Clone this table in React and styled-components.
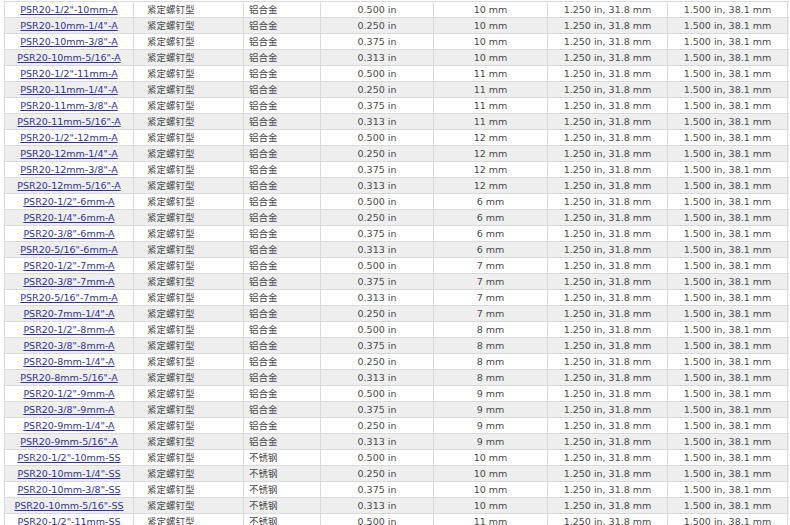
import React from "react";
import styled, { createGlobalStyle } from "styled-components";

const Global = createGlobalStyle`
  html, body { margin: 0; padding: 0; background: #fff; }
  body { overflow: hidden; }
`;

const Page = styled.div`
  padding: 1px 0 0 4px;
  width: 790px;
  box-sizing: border-box;
`;

const Table = styled.div`
  display: flex;
  flex-direction: column;
  border-left: 1px solid #d9d9d9;
  width: 784px;
  font-family: "DejaVu Sans", Verdana, "Noto Sans CJK SC", sans-serif;
  font-size: 9.5px;
  color: #4a4a4a;
`;

const Row = styled.div`
  display: grid;
  grid-template-columns: 129px 110px 77px 113px 114px 120px 120px;
  background: ${(p) => (p.$alt ? "#eeeeee" : "#ffffff")};
  border-top: 1px solid #dadada;
`;

const Cell = styled.div`
  box-sizing: border-box;
  height: 15px;
  line-height: 15px;
  border-right: 1px solid #dadada;
  white-space: nowrap;
  overflow: hidden;
  text-align: ${(p) => p.$align || "center"};
  padding-left: ${(p) => p.$pl || 0}px;
`;

const Link = styled.a`
  color: #3232a6;
  text-decoration: underline;
  cursor: pointer;
`;

const rows = [
  ['PSR20-1/2"-10mm-A', "铝合金", "0.500", "10"],
  ['PSR20-10mm-1/4"-A', "铝合金", "0.250", "10"],
  ['PSR20-10mm-3/8"-A', "铝合金", "0.375", "10"],
  ['PSR20-10mm-5/16"-A', "铝合金", "0.313", "10"],
  ['PSR20-1/2"-11mm-A', "铝合金", "0.500", "11"],
  ['PSR20-11mm-1/4"-A', "铝合金", "0.250", "11"],
  ['PSR20-11mm-3/8"-A', "铝合金", "0.375", "11"],
  ['PSR20-11mm-5/16"-A', "铝合金", "0.313", "11"],
  ['PSR20-1/2"-12mm-A', "铝合金", "0.500", "12"],
  ['PSR20-12mm-1/4"-A', "铝合金", "0.250", "12"],
  ['PSR20-12mm-3/8"-A', "铝合金", "0.375", "12"],
  ['PSR20-12mm-5/16"-A', "铝合金", "0.313", "12"],
  ['PSR20-1/2"-6mm-A', "铝合金", "0.500", "6"],
  ['PSR20-1/4"-6mm-A', "铝合金", "0.250", "6"],
  ['PSR20-3/8"-6mm-A', "铝合金", "0.375", "6"],
  ['PSR20-5/16"-6mm-A', "铝合金", "0.313", "6"],
  ['PSR20-1/2"-7mm-A', "铝合金", "0.500", "7"],
  ['PSR20-3/8"-7mm-A', "铝合金", "0.375", "7"],
  ['PSR20-5/16"-7mm-A', "铝合金", "0.313", "7"],
  ['PSR20-7mm-1/4"-A', "铝合金", "0.250", "7"],
  ['PSR20-1/2"-8mm-A', "铝合金", "0.500", "8"],
  ['PSR20-3/8"-8mm-A', "铝合金", "0.375", "8"],
  ['PSR20-8mm-1/4"-A', "铝合金", "0.250", "8"],
  ['PSR20-8mm-5/16"-A', "铝合金", "0.313", "8"],
  ['PSR20-1/2"-9mm-A', "铝合金", "0.500", "9"],
  ['PSR20-3/8"-9mm-A', "铝合金", "0.375", "9"],
  ['PSR20-9mm-1/4"-A', "铝合金", "0.250", "9"],
  ['PSR20-9mm-5/16"-A', "铝合金", "0.313", "9"],
  ['PSR20-1/2"-10mm-SS', "不锈钢", "0.500", "10"],
  ['PSR20-10mm-1/4"-SS', "不锈钢", "0.250", "10"],
  ['PSR20-10mm-3/8"-SS', "不锈钢", "0.375", "10"],
  ['PSR20-10mm-5/16"-SS', "不锈钢", "0.313", "10"],
  ['PSR20-1/2"-11mm-SS', "不锈钢", "0.500", "11"],
];

export default function App() {
  return (
    <>
      <Global />
      <Page>
        <Table>
          {rows.map(([part, mat, inch, mm], i) => (
            <Row key={part} $alt={i % 2 === 1}>
              <Cell>
                <Link>{part}</Link>
              </Cell>
              <Cell $align="left" $pl={13}>紧定螺钉型</Cell>
              <Cell $align="left" $pl={5}>{mat}</Cell>
              <Cell>{inch} in</Cell>
              <Cell>{mm} mm</Cell>
              <Cell>1.250 in, 31.8 mm</Cell>
              <Cell>1.500 in, 38.1 mm</Cell>
            </Row>
          ))}
        </Table>
      </Page>
    </>
  );
}
